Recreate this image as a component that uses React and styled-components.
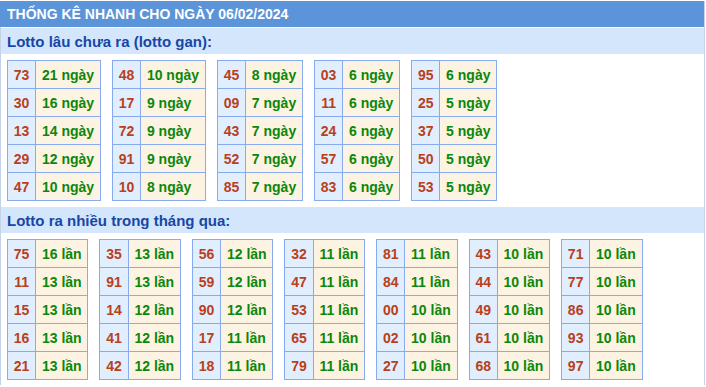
import React from 'react';
import styled, { createGlobalStyle } from 'styled-components';

const ganData = [
  [['73', '21'], ['30', '16'], ['13', '14'], ['29', '12'], ['47', '10']],
  [['48', '10'], ['17', '9'], ['72', '9'], ['91', '9'], ['10', '8']],
  [['45', '8'], ['09', '7'], ['43', '7'], ['52', '7'], ['85', '7']],
  [['03', '6'], ['11', '6'], ['24', '6'], ['57', '6'], ['83', '6']],
  [['95', '6'], ['25', '5'], ['37', '5'], ['50', '5'], ['53', '5']],
];

const monthData = [
  [['75', '16'], ['11', '13'], ['15', '13'], ['16', '13'], ['21', '13']],
  [['35', '13'], ['91', '13'], ['14', '12'], ['41', '12'], ['42', '12']],
  [['56', '12'], ['59', '12'], ['90', '12'], ['17', '11'], ['18', '11']],
  [['32', '11'], ['47', '11'], ['53', '11'], ['65', '11'], ['79', '11']],
  [['81', '11'], ['84', '11'], ['00', '10'], ['02', '10'], ['27', '10']],
  [['43', '10'], ['44', '10'], ['49', '10'], ['61', '10'], ['68', '10']],
  [['71', '10'], ['77', '10'], ['86', '10'], ['93', '10'], ['97', '10']],
];

function StatTable({ rows, unit }) {
  return (
    <Table>
      <tbody>
        {rows.map(([num, count]) => (
          <tr key={num}>
            <NumCell>{num}</NumCell>
            <CountCell>
              {count} {unit}
            </CountCell>
          </tr>
        ))}
      </tbody>
    </Table>
  );
}

export default function App() {
  return (
    <>
      <GlobalStyle />
      <Box>
        <Header>THỐNG KÊ NHANH CHO NGÀY 06/02/2024</Header>
        <SubHeader>Lotto lâu chưa ra (lotto gan):</SubHeader>
        <TableRow>
          {ganData.map((rows, i) => (
            <StatTable key={i} rows={rows} unit="ngày" />
          ))}
        </TableRow>
        <SubHeader>Lotto ra nhiều trong tháng qua:</SubHeader>
        <TableRow>
          {monthData.map((rows, i) => (
            <StatTable key={i} rows={rows} unit="lần" />
          ))}
        </TableRow>
      </Box>
    </>
  );
}

const GlobalStyle = createGlobalStyle`
  html, body {
    margin: 0;
    padding: 0;
    background: #ffffff;
    font-family: "Liberation Sans", Arial, sans-serif;
  }
`;

const Box = styled.div`
  width: 703px;
  margin-top: 1px;
  border-left: 1px solid #c4d2e8;
  border-right: 1px solid #c4d2e8;
  background: #ffffff;
`;

const Header = styled.div`
  height: 26px;
  line-height: 26px;
  padding-left: 7px;
  margin-left: -1px;
  background: #5b94d8;
  color: #ffffff;
  font-size: 14px;
  font-weight: bold;
`;

const SubHeader = styled.div`
  height: 26px;
  line-height: 27px;
  padding-left: 6px;
  margin-top: 1px;
  background: #d3e6fb;
  color: #1747a6;
  font-size: 15px;
  font-weight: bold;
`;

const TableRow = styled.div`
  display: flex;
  align-items: flex-start;
  gap: 11px;
  padding: 6px 0 5px 6px;
`;

const Table = styled.table`
  border-collapse: collapse;
  font-size: 14px;
  font-weight: bold;

  td {
    height: 27px;
    padding: 0 5.8px;
    border: 1px solid #88aaee;
    white-space: nowrap;
  }
`;

const NumCell = styled.td`
  background: #e1eefd;
  color: #b8401b;
  text-align: center;
`;

const CountCell = styled.td`
  background: #fdf3e2;
  color: #0b870b;
  text-align: left;
`;
